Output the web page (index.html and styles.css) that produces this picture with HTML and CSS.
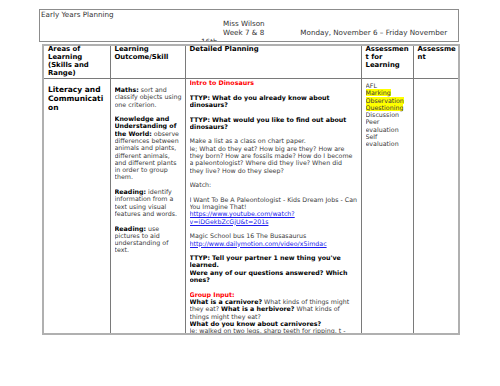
FILE: index.html
```html
<!DOCTYPE html>
<html>
<head>
<meta charset="utf-8">
<link rel="stylesheet" href="styles.css">
</head>
<body>
<div class="page">
  <div class="headbox">
    <div class="title">Early Years Planning</div>
    <div class="meta">
      <div>Miss Wilson</div>
      <div class="weekline"><span>Week 7 &amp; 8</span><span class="dates">Monday, November 6 – Friday November</span></div>
    </div>
    <div class="wrapday">16th</div>
  </div>
  <table class="plan">
    <colgroup>
      <col class="c1"><col class="c2"><col class="c3"><col class="c4"><col class="c5">
    </colgroup>
    <thead>
      <tr>
        <th>Areas of Learning (Skills and Range)</th>
        <th>Learning Outcome/Skill</th>
        <th>Detailed Planning</th>
        <th>Assessment for Learning</th>
        <th class="last">Assessment</th>
      </tr>
    </thead>
    <tbody>
      <tr>
        <td class="area"><div class="clip pad1">Literacy and Communication</div></td>
        <td><div class="clip pad2">
          <p><b>Maths:</b> sort and classify objects using one criterion.</p>
          <p><b>Knowledge and Understanding of the World:</b> observe differences between animals and plants, different animals, and different plants in order to group them.</p>
          <p><b>Reading:</b> identify information from a text using visual features and words.</p>
          <p><b>Reading:</b> use pictures to aid understanding of text.</p>
        </div></td>
        <td><div class="clip pad3">
          <p><b class="red">Intro to Dinosaurs</b></p>
          <p><b>TTYP: What do you already know about dinosaurs?</b></p>
          <p><b>TTYP: What would you like to find out about dinosaurs?</b></p>
          <p>Make a list as a class on chart paper.<br>Ie; What do they eat? How big are they? How are they born? How are fossils made? How do I become a paleontologist? Where did they live? When did they live? How do they sleep?</p>
          <p>Watch:</p>
          <p>I Want To Be A Paleontologist - Kids Dream Jobs - Can You Imagine That!<br><a href="#">https://www.youtube.com/watch?<br>v=iDGekbZcGjU&amp;t=201s</a></p>
          <p>Magic School bus 16 The Busasaurus<br><a href="#">http://www.dailymotion.com/video/x5imdac</a></p>
          <p><b>TTYP: Tell your partner 1 new thing you've learned.<br>Were any of our questions answered? Which ones?</b></p>
          <p><b class="red">Group Input:</b><br><b>What is a carnivore?</b> What kinds of things might they eat? <b>What is a herbivore?</b> What kinds of things might they eat?<br><b>What do you know about carnivores?</b><br>Ie; walked on two legs, sharp teeth for ripping, t - </p>
        </div></td>
        <td><div class="clip pad4">
          AFL<br><mark>Marking</mark><br><mark>Observation</mark><br><mark>Questioning</mark><br>Discussion<br>Peer evaluation<br>Self evaluation
        </div></td>
        <td><div class="clip"></div></td>
      </tr>
    </tbody>
  </table>
</div>
</body>
</html>
```
FILE: styles.css
```css
html, body {
  margin: 0;
  padding: 0;
  background: #fff;
}
body {
  font-family: "DejaVu Sans", Verdana, sans-serif;
  color: #3a3a3a;
}
.page {
  padding: 9px 0 0 39px;
}
.headbox {
  width: 418px;
  height: 31px;
  border: 1px solid #8c8c8c;
  overflow: hidden;
  font-size: 7.2px;
  line-height: 9px;
  color: #333;
}
.title {
  padding-left: 1px;
}
.meta {
  padding-left: 183px;
}
.weekline {
  display: flex;
}
.dates {
  margin-left: 36px;
}
.wrapday {
  padding-left: 161px;
}
.plan {
  margin: 2px 0 0 3px;
  width: 416px;
  border-collapse: collapse;
  table-layout: fixed;
  border: 2px solid #b0b0b0;
}
.c1 { width: 67px; }
.c2 { width: 75px; }
.c3 { width: 176px; }
.c4 { width: 52px; }
.c5 { width: 46px; }
th, td {
  border: 1px solid #7a7a7a;
  vertical-align: top;
  text-align: left;
  padding: 0 3px 0 4px;
  overflow-wrap: anywhere;
}
th {
  height: 30px;
  font-size: 6.9px;
  line-height: 7.9px;
  font-weight: bold;
  color: #000;
}
th.last {
  padding-right: 1px;
}
td {
  font-size: 6.3px;
  line-height: 7.3px;
}
.clip {
  height: 254px;
  overflow: hidden;
  box-sizing: border-box;
}
.area .clip {
  font-size: 7.5px;
  line-height: 8.7px;
  font-weight: bold;
  color: #000;
}
.pad1 { padding-top: 7.6px; }
.pad2 { padding-top: 7.3px; }
.pad3 { padding-top: 0.4px; }
.pad4 { padding-top: 3.3px; }
p {
  margin: 0 0 7.3px 0;
}
b {
  color: #000;
}
.red {
  color: #ff0000;
}
a {
  color: #1a1aee;
}
mark {
  background: #ffff00;
  color: #3a3a3a;
}
```
